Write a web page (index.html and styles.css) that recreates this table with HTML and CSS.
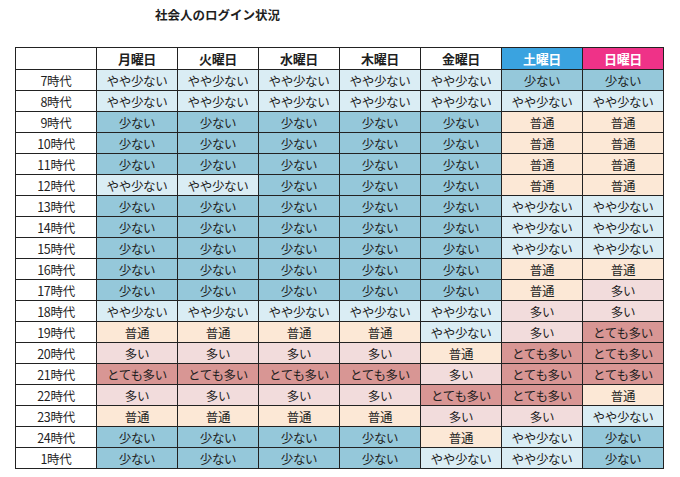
FILE: index.html
```html
<!DOCTYPE html>
<html lang="ja">
<head>
<meta charset="utf-8">
<link rel="stylesheet" href="styles.css">
</head>
<body>
<h1 class="title">社会人のログイン状況</h1>
<table class="grid">
<thead>
<tr><th class="blank"></th><th>月曜日</th><th>火曜日</th><th>水曜日</th><th>木曜日</th><th>金曜日</th><th class="sat">土曜日</th><th class="sun">日曜日</th></tr>
</thead>
<tbody>
<tr><td class="lbl">7時代</td><td class="l2">やや少ない</td><td class="l2">やや少ない</td><td class="l2">やや少ない</td><td class="l2">やや少ない</td><td class="l2">やや少ない</td><td class="l1">少ない</td><td class="l1">少ない</td></tr>
<tr><td class="lbl">8時代</td><td class="l2">やや少ない</td><td class="l2">やや少ない</td><td class="l2">やや少ない</td><td class="l2">やや少ない</td><td class="l2">やや少ない</td><td class="l2">やや少ない</td><td class="l2">やや少ない</td></tr>
<tr><td class="lbl">9時代</td><td class="l1">少ない</td><td class="l1">少ない</td><td class="l1">少ない</td><td class="l1">少ない</td><td class="l1">少ない</td><td class="l3">普通</td><td class="l3">普通</td></tr>
<tr><td class="lbl">10時代</td><td class="l1">少ない</td><td class="l1">少ない</td><td class="l1">少ない</td><td class="l1">少ない</td><td class="l1">少ない</td><td class="l3">普通</td><td class="l3">普通</td></tr>
<tr><td class="lbl">11時代</td><td class="l1">少ない</td><td class="l1">少ない</td><td class="l1">少ない</td><td class="l1">少ない</td><td class="l1">少ない</td><td class="l3">普通</td><td class="l3">普通</td></tr>
<tr><td class="lbl">12時代</td><td class="l2">やや少ない</td><td class="l2">やや少ない</td><td class="l1">少ない</td><td class="l1">少ない</td><td class="l1">少ない</td><td class="l3">普通</td><td class="l3">普通</td></tr>
<tr><td class="lbl">13時代</td><td class="l1">少ない</td><td class="l1">少ない</td><td class="l1">少ない</td><td class="l1">少ない</td><td class="l1">少ない</td><td class="l2">やや少ない</td><td class="l2">やや少ない</td></tr>
<tr><td class="lbl">14時代</td><td class="l1">少ない</td><td class="l1">少ない</td><td class="l1">少ない</td><td class="l1">少ない</td><td class="l1">少ない</td><td class="l2">やや少ない</td><td class="l2">やや少ない</td></tr>
<tr><td class="lbl">15時代</td><td class="l1">少ない</td><td class="l1">少ない</td><td class="l1">少ない</td><td class="l1">少ない</td><td class="l1">少ない</td><td class="l2">やや少ない</td><td class="l2">やや少ない</td></tr>
<tr><td class="lbl">16時代</td><td class="l1">少ない</td><td class="l1">少ない</td><td class="l1">少ない</td><td class="l1">少ない</td><td class="l1">少ない</td><td class="l3">普通</td><td class="l3">普通</td></tr>
<tr><td class="lbl">17時代</td><td class="l1">少ない</td><td class="l1">少ない</td><td class="l1">少ない</td><td class="l1">少ない</td><td class="l1">少ない</td><td class="l3">普通</td><td class="l4">多い</td></tr>
<tr><td class="lbl">18時代</td><td class="l2">やや少ない</td><td class="l2">やや少ない</td><td class="l2">やや少ない</td><td class="l2">やや少ない</td><td class="l2">やや少ない</td><td class="l4">多い</td><td class="l4">多い</td></tr>
<tr><td class="lbl">19時代</td><td class="l3">普通</td><td class="l3">普通</td><td class="l3">普通</td><td class="l3">普通</td><td class="l2">やや少ない</td><td class="l4">多い</td><td class="l5">とても多い</td></tr>
<tr><td class="lbl">20時代</td><td class="l4">多い</td><td class="l4">多い</td><td class="l4">多い</td><td class="l4">多い</td><td class="l3">普通</td><td class="l5">とても多い</td><td class="l5">とても多い</td></tr>
<tr><td class="lbl">21時代</td><td class="l5">とても多い</td><td class="l5">とても多い</td><td class="l5">とても多い</td><td class="l5">とても多い</td><td class="l4">多い</td><td class="l5">とても多い</td><td class="l5">とても多い</td></tr>
<tr><td class="lbl">22時代</td><td class="l4">多い</td><td class="l4">多い</td><td class="l4">多い</td><td class="l4">多い</td><td class="l5">とても多い</td><td class="l5">とても多い</td><td class="l3">普通</td></tr>
<tr><td class="lbl">23時代</td><td class="l3">普通</td><td class="l3">普通</td><td class="l3">普通</td><td class="l3">普通</td><td class="l4">多い</td><td class="l4">多い</td><td class="l2">やや少ない</td></tr>
<tr><td class="lbl">24時代</td><td class="l1">少ない</td><td class="l1">少ない</td><td class="l1">少ない</td><td class="l1">少ない</td><td class="l3">普通</td><td class="l2">やや少ない</td><td class="l1">少ない</td></tr>
<tr><td class="lbl">1時代</td><td class="l1">少ない</td><td class="l1">少ない</td><td class="l1">少ない</td><td class="l1">少ない</td><td class="l2">やや少ない</td><td class="l2">やや少ない</td><td class="l1">少ない</td></tr>
</tbody>
</table>
</body>
</html>
```

FILE: styles.css
```css
html, body {
  margin: 0;
  padding: 0;
  background: #ffffff;
}
body {
  font-family: "Noto Sans CJK JP", "Noto Sans", sans-serif;
  color: #1f1f1f;
  padding: 6px 0 0 15px;
}
.title {
  margin: 0;
  padding-left: 140px;
  font-size: 12.5px;
  line-height: 18px;
  font-weight: bold;
  height: 41px;
}
.grid {
  border-collapse: collapse;
  table-layout: fixed;
  width: 649px;
}
.grid th, .grid td {
  border: 1px solid #222;
  width: 80px;
  padding: 0;
  text-align: center;
  white-space: nowrap;
  overflow: hidden;
  font-size: 12.5px;
  letter-spacing: -0.3px;
}
.grid th {
  height: 21px;
  font-weight: bold;
  font-size: 13px;
  background: #ffffff;
  line-height: 20px;
}
.grid td {
  height: 20px;
  line-height: 19px;
}
.grid th.sat { background: #3aa3e0; color: #fff; }
.grid th.sun { background: #ef3288; color: #fff; }
.lbl { background: #ffffff; }
.l1 { background: #95c8da; }
.l2 { background: #daedf4; }
.l3 { background: #fce8d6; }
.l4 { background: #f2dcdc; }
.l5 { background: #d89694; }
```
